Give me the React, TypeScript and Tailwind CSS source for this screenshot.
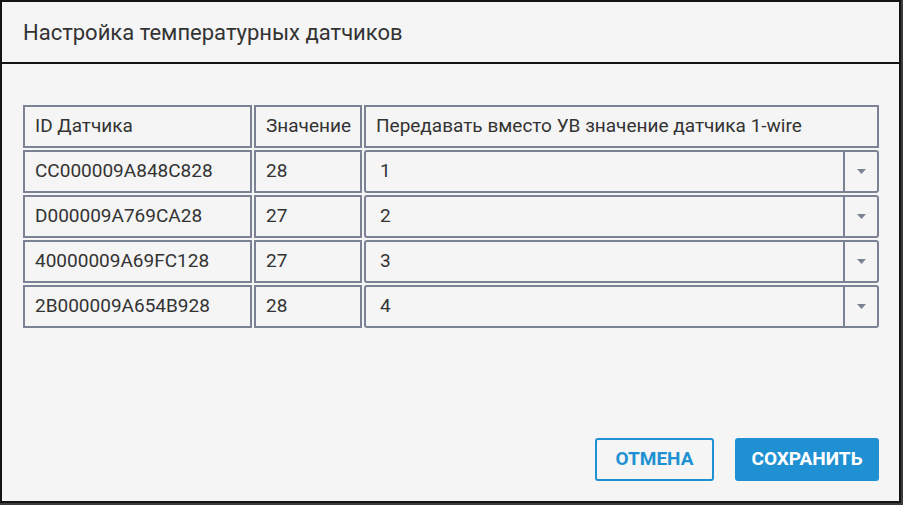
import React from 'react';

const rows = [
    { id: 'CC000009A848C828', value: '28', wire: '1' },
    { id: 'D000009A769CA28', value: '27', wire: '2' },
    { id: '40000009A69FC128', value: '27', wire: '3' },
    { id: '2B000009A654B928', value: '28', wire: '4' },
];

const cell = 'h-[43px] border-2 border-[#7a8294] flex items-center pl-[10px] text-[19px] text-[#333]';

function Select({ value }: { value: string }) {
    return (
        <div className="h-[43px] border-2 border-[#7a8294] rounded-[3px] flex items-stretch text-[19px] text-[#333]">
            <div className="flex-1 flex items-center pl-[14px]">{value}</div>
            <div className="w-[34px] border-l-2 border-[#7a8294] flex items-center justify-center">
                <svg width="9" height="5" viewBox="0 0 9 5">
                    <path d="M0 0 L9 0 L4.5 5 Z" fill="#7a8294" />
                </svg>
            </div>
        </div>
    );
}

export default function App() {
    return (
        <div className="w-[903px] h-[505px] bg-[#3c3c3c]" style={{ fontFamily: 'Roboto, sans-serif' }}>
            <div className="w-[901px] h-[503px] border-2 border-[#141414] bg-[#f5f5f5] flex flex-col">
                <div className="h-[62px] border-b-2 border-[#141414] flex items-center pl-[21px]">
                    <h2 className="text-[22px] text-[#333]">Настройка температурных датчиков</h2>
                </div>

                <div className="flex-1 flex flex-col pl-[21px] pr-[20px] pt-[41px] pb-[20px]">
                    <div className="grid grid-cols-[229px_108px_1fr] gap-[2px]">
                        <div className={cell}>ID Датчика</div>
                        <div className={cell}>Значение</div>
                        <div className={cell}>Передавать вместо УВ значение датчика 1-wire</div>

                        {rows.map(r => (
                            <React.Fragment key={r.id}>
                                <div className={cell}>{r.id}</div>
                                <div className={cell}>{r.value}</div>
                                <Select value={r.wire} />
                            </React.Fragment>
                        ))}
                    </div>

                    <div className="flex-1" />

                    <div className="flex justify-end gap-[21px]">
                        <button className="h-[43px] w-[119px] border-2 border-[#1f91d3] rounded-[3px] text-[#1f91d3] font-bold text-[19px] uppercase">
                            Отмена
                        </button>
                        <button className="h-[43px] w-[144px] bg-[#1f91d3] rounded-[3px] text-white font-bold text-[19px] uppercase">
                            Сохранить
                        </button>
                    </div>
                </div>
            </div>
        </div>
    );
}
